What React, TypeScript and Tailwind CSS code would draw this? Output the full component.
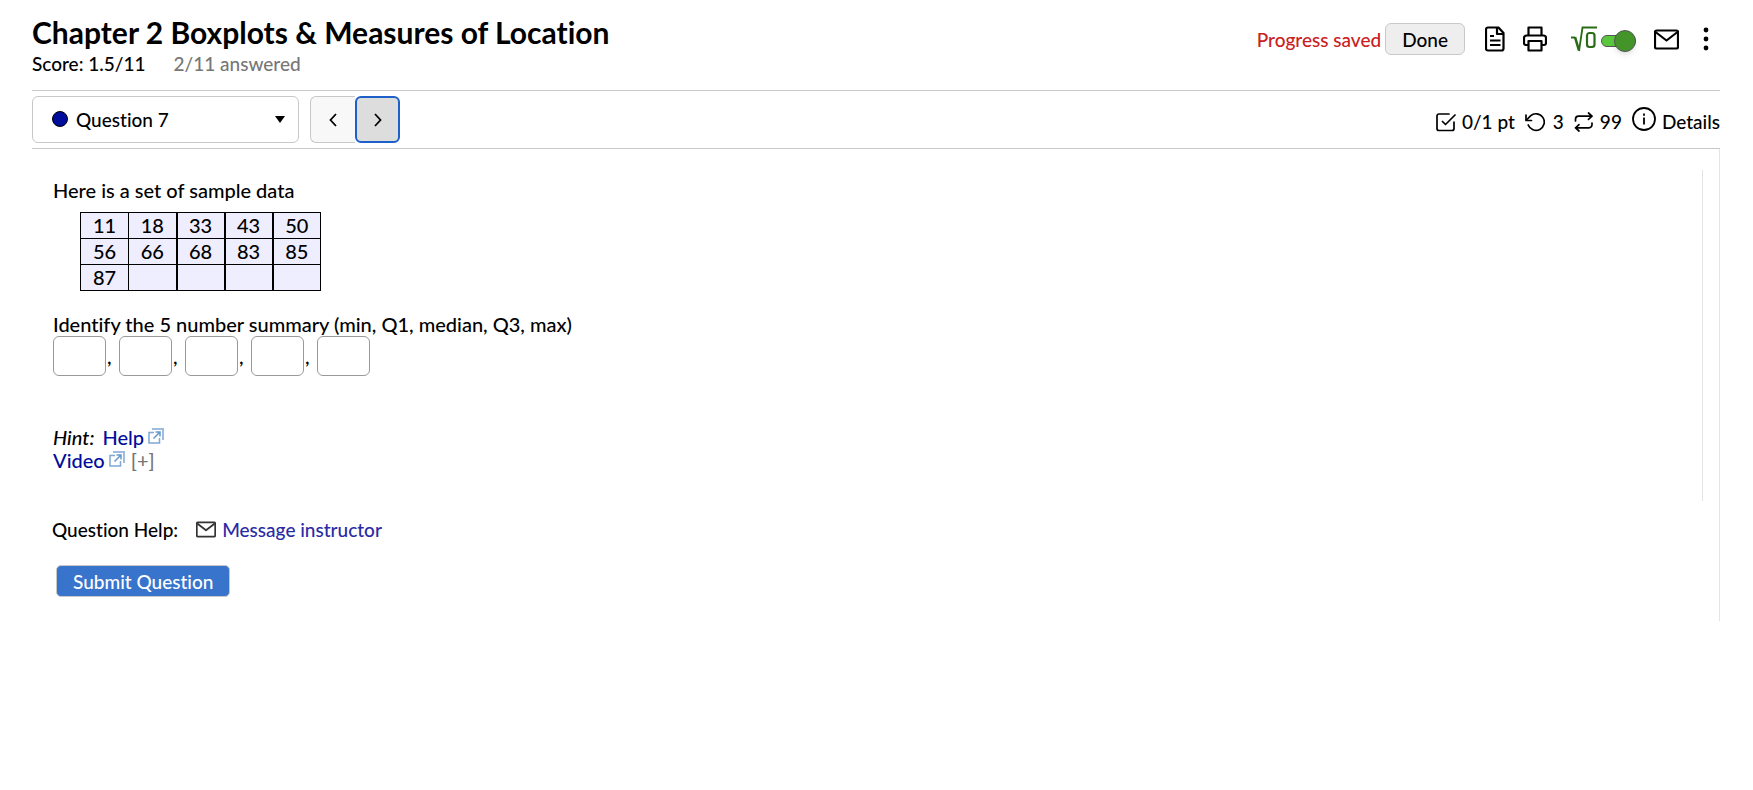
import React, { useState } from 'react';

type IconProps = { className?: string };

const FileIcon = ({ className }: IconProps) => (
  <svg viewBox="0 0 20 26" className={className} fill="none" stroke="currentColor" strokeWidth="2.200" strokeLinejoin="round" aria-hidden="true">
    <path d="M3 1.500h10.500L18.500 7v15.500a2 2 0 0 1-2 2H3a2 2 0 0 1-2-2v-19a2 2 0 0 1 2-2z" />
    <path d="M12 1.500V8h6.500" />
    <path d="M5 10h4M5 14.500h10.500M5 19h10.500" />
  </svg>
);

const PrinterIcon = ({ className }: IconProps) => (
  <svg viewBox="0 0 24 26" className={className} fill="none" stroke="currentColor" strokeWidth="2.200" strokeLinejoin="round" aria-hidden="true">
    <path d="M5.500 10V1.500h13V10" />
    <path d="M5.500 19H3a2 2 0 0 1-2-2v-5a2.500 2.500 0 0 1 2.500-2.500h17A2.500 2.500 0 0 1 23 12v5a2 2 0 0 1-2 2h-2.500" />
    <path d="M5.500 15h13v9.500h-13z" />
  </svg>
);

const RootIcon = ({ className }: IconProps) => (
  <svg viewBox="0 0 26 26" className={className} fill="none" stroke="currentColor" aria-hidden="true">
    <path d="M0 11.500h4" strokeWidth="2" />
    <path d="M4 11l4 13.500" strokeWidth="2.600" />
    <path d="M8 25l3.500-23.500H26" strokeWidth="1.800" />
    <rect x="16" y="7" width="7.500" height="14" rx="2.500" strokeWidth="2.200" />
  </svg>
);

const MailIcon = ({ className }: IconProps) => (
  <svg viewBox="0 0 25 21" className={className} fill="none" stroke="currentColor" strokeWidth="2.200" strokeLinejoin="round" aria-hidden="true">
    <rect x="1" y="1.500" width="23" height="18" rx="1.500" />
    <path d="M1.500 3l11 8.500L23.500 3" />
  </svg>
);

const DotsIcon = ({ className }: IconProps) => (
  <svg viewBox="0 0 6 24" className={className} fill="currentColor" aria-hidden="true">
    <circle cx="3" cy="3" r="2.400" />
    <circle cx="3" cy="12" r="2.400" />
    <circle cx="3" cy="21" r="2.400" />
  </svg>
);

const CheckSquareIcon = ({ className }: IconProps) => (
  <svg viewBox="0 0 20 20" className={className} fill="none" stroke="currentColor" strokeWidth="1.700" strokeLinecap="round" strokeLinejoin="round" aria-hidden="true">
    <path d="M13 2H3a2 2 0 0 0-2 2v12.500a2 2 0 0 0 2 2h13a2 2 0 0 0 2-2V10" />
    <path d="M6.500 9.500l3 3L19 3" />
  </svg>
);

const UndoIcon = ({ className }: IconProps) => (
  <svg viewBox="0 0 20 20" className={className} fill="none" stroke="currentColor" strokeWidth="1.700" strokeLinecap="round" strokeLinejoin="round" aria-hidden="true">
    <path d="M1 3v5.500h5.500" />
    <path d="M1.500 8l4-4.200A8.300 8.300 0 1 1 3.200 13" />
  </svg>
);

const RepeatIcon = ({ className }: IconProps) => (
  <svg viewBox="0 0 20 20" className={className} fill="none" stroke="currentColor" strokeWidth="1.700" strokeLinecap="round" strokeLinejoin="round" aria-hidden="true">
    <path d="M14.500 1l3.500 3.200-3.500 3.200M1.500 9V7.200a3 3 0 0 1 3-3H18" />
    <path d="M5 12.600l-3.500 3.200L5 19M18 11v1.800a3 3 0 0 1-3 3H1.500" />
  </svg>
);

const InfoIcon = ({ className }: IconProps) => (
  <svg viewBox="0 0 24 24" className={className} fill="none" stroke="currentColor" strokeWidth="1.800" aria-hidden="true">
    <circle cx="12" cy="12" r="11" />
    <path d="M12 10.500v7M12 6.500v2.200" />
  </svg>
);

const ExternalIcon = ({ className }: IconProps) => (
  <svg viewBox="0 0 16 16" className={className} fill="none" aria-hidden="true">
    <path d="M6 4.500H1V15h10.500v-5" stroke="#7fa8d4" strokeWidth="1.500" />
    <path d="M4 1h11v11" stroke="#9dbce0" strokeWidth="2" />
    <path d="M5.500 10.500l6.500-6.500M7.500 4H12v4.500" stroke="#6699cc" strokeWidth="1.500" />
  </svg>
);

const rows = [
  ['11', '18', '33', '43', '50'],
  ['56', '66', '68', '83', '85'],
  ['87', '', '', '', ''],
];

const fields = ['min', 'Q1', 'median', 'Q3', 'max'];

const Header = () => {
  const [mathOn, setMathOn] = useState(true);

  return (
    <header className="flex justify-between border-b border-[#c8c8c8] pt-[15px] pb-3">
      <div>
        <h1 className="text-[30px] leading-[34px] font-bold">Chapter 2 Boxplots &amp; Measures of Location</h1>
        <div className="flex gap-7 pt-px leading-7">
          <span>Score: 1.5/11</span>
          <span className="text-[#777]">2/11 answered</span>
        </div>
      </div>

      <div className="flex h-12 items-center">
        <span className="text-[#c9211e]">Progress saved</span>
        <button type="button" className="ml-1 h-8 rounded-md border border-[#c8c8c8] bg-[#eee] px-4">Done</button>
        <button type="button" aria-label="Text view" className="ml-5">
          <FileIcon className="h-[26px] w-5" />
        </button>
        <button type="button" aria-label="Print" className="ml-[18px]">
          <PrinterIcon className="h-[26px] w-6" />
        </button>
        <label className="ml-6 flex items-center gap-1 text-[#2a6b16]">
          <RootIcon className="h-[26px] w-[26px]" />
          <input
            type="checkbox"
            aria-label="Math entry"
            checked={mathOn}
            onChange={() => setMathOn(!mathOn)}
            className="relative mt-1 h-3 w-[35px] appearance-none rounded-full border border-[#555] bg-[#aaa] checked:bg-[#5ac83c] before:absolute before:-top-[6px] before:-left-px before:h-[22px] before:w-[22px] before:rounded-full before:border before:border-[#555] before:bg-[#777] before:shadow-md checked:before:left-3 checked:before:bg-[#43952a]"
          />
        </label>
        <button type="button" aria-label="Messages" className="ml-[18px]">
          <MailIcon className="h-[21px] w-[25px]" />
        </button>
        <button type="button" aria-label="More" className="mr-[11px] ml-6">
          <DotsIcon className="h-6 w-[6px]" />
        </button>
      </div>
    </header>
  );
};

const QuestionBar = () => (
  <div className="flex items-center justify-between border-b border-[#c8c8c8] py-[5px]">
    <div className="flex">
      <div className="relative">
        <select aria-label="Question" className="h-[47px] w-[267px] appearance-none rounded-md border border-[#c8c8c8] bg-white pl-[43px]">
          <option>Question 7</option>
        </select>
        <span className="pointer-events-none absolute top-[15px] left-5 h-4 w-4 rounded-full border border-black bg-[#000c9c]" />
        <svg viewBox="0 0 10 7" className="pointer-events-none absolute top-5 right-[14px] h-[7px] w-[10px]" aria-hidden="true">
          <path d="M0 0h10L5 7z" />
        </svg>
      </div>
      <div className="ml-[11px] flex">
        <button type="button" aria-label="Previous question" className="flex h-[47px] w-[45px] items-center justify-center rounded-l-md border border-r-0 border-[#c8c8c8] bg-[#f8f8f8]">
          <svg viewBox="0 0 8 14" className="h-[14px] w-2" fill="none" stroke="currentColor" strokeWidth="1.800" aria-hidden="true">
            <path d="M7 1L1.500 7 7 13" />
          </svg>
        </button>
        <button type="button" aria-label="Next question" className="flex h-[47px] w-[45px] items-center justify-center rounded-md border-2 border-[#1f5fc9] bg-[#ddd]">
          <svg viewBox="0 0 8 14" className="h-[14px] w-2" fill="none" stroke="currentColor" strokeWidth="1.800" aria-hidden="true">
            <path d="M1 1l5.500 6L1 13" />
          </svg>
        </button>
      </div>
    </div>

    <div className="flex items-center gap-[10px] pt-1">
      <span className="flex items-center gap-[6px]"><CheckSquareIcon className="h-5 w-5" />0/1 pt</span>
      <span className="flex items-center gap-2"><UndoIcon className="h-5 w-5" />3</span>
      <span className="flex items-center gap-[6px]"><RepeatIcon className="h-5 w-5" />99</span>
      <button type="button" className="flex items-center gap-[6px]">
        <InfoIcon className="mb-[6px] h-6 w-6" />
        Details
      </button>
    </div>
  </div>
);

const App = () => {
  return (
    <div className="min-h-screen bg-white pr-[33px] pl-8 font-['Lato',sans-serif] text-[19px] leading-[23px] font-medium text-black [font-variant-ligatures:none]">
      <Header />
      <QuestionBar />

      <main className="border-r border-[#e4e4e4] pt-[21px] pr-4 pb-6 pl-5">
        <section className="border-r border-[#e4e4e4] pt-[9px] pb-[29px] pl-px text-[20px]">
          <p>Here is a set of sample data</p>
          <table className="mt-[10px] ml-[27px] border-collapse bg-[#eef] text-center">
            <tbody>
              {rows.map((row, i) => (
                <tr key={i}>
                  {row.map((cell, j) => (
                    <td key={j} className={`h-[26px] w-12 border border-black p-0 ${j > 1 ? 'border-l-2' : ''}`}>{cell}</td>
                  ))}
                </tr>
              ))}
            </tbody>
          </table>

          <p className="mt-[22px]">Identify the 5 number summary (min, Q1, median, Q3, max)</p>
          <div className="flex items-center">
            {fields.map((field, i) => (
              <React.Fragment key={field}>
                <input type="text" aria-label={field} className="h-10 w-[53px] rounded-md border border-[#999] px-2" />
                {i < fields.length - 1 && <span className="w-[13px] pl-px">,</span>}
              </React.Fragment>
            ))}
          </div>

          <div className="mt-[50px]">
            <div className="flex items-center">
              <i className="mr-2">Hint:</i>
              <a href="#help" className="flex items-center gap-1 text-[#000c9c]">
                Help <ExternalIcon className="mb-1 h-4 w-4" />
              </a>
            </div>
            <div className="flex items-center">
              <a href="#video" className="flex items-center gap-1 text-[#000c9c]">
                Video <ExternalIcon className="mb-1 h-4 w-4" />
              </a>
              <button type="button" className="ml-[6px] text-[#777]">[+]</button>
            </div>
          </div>
        </section>

        <div className="mt-[17px] flex items-center">
          <span>Question Help:</span>
          <a href="#message" className="ml-[18px] flex items-center gap-[6px] text-[#2a2aa5]">
            <MailIcon className="h-[17px] w-5 text-[#333]" />
            Message instructor
          </a>
        </div>

        <button type="button" className="mt-6 ml-1 h-8 rounded-[5px] border border-[#c8c8c8] bg-[#3874cb] px-4 text-white">
          Submit Question
        </button>
      </main>
    </div>
  );
};

export default App;
